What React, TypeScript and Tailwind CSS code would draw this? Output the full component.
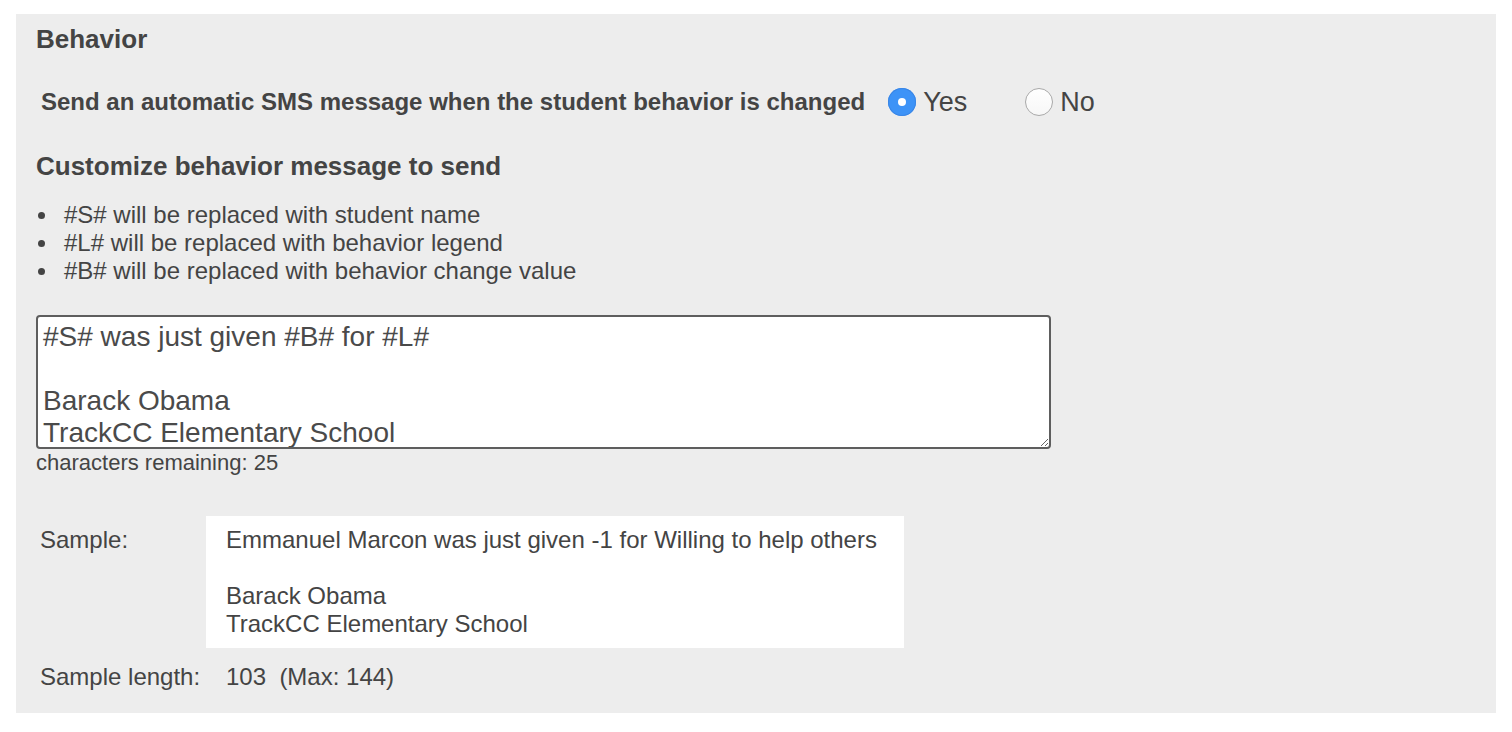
import React from "react";

const font = { fontFamily: '"Liberation Sans", Arial, Helvetica, sans-serif' };

const Radio: React.FC<{ checked?: boolean; label: string }> = ({ checked, label }) => (
  <label className="flex items-center">
    {checked ? (
      <span className="w-[28px] h-[28px] rounded-full bg-[#3d93f7] flex items-center justify-center shadow-[inset_0_0_0_1px_#3a86e6]">
        <span className="w-[8px] h-[8px] rounded-full bg-white" />
      </span>
    ) : (
      <span className="w-[28px] h-[28px] rounded-full bg-gradient-to-b from-white to-[#f7f7f7] border border-[#a9a9a9]" />
    )}
    <span className="ml-[7px] text-[27px] leading-[30px] text-[#444]">{label}</span>
  </label>
);

const bullets = [
  "#S# will be replaced with student name",
  "#L# will be replaced with behavior legend",
  "#B# will be replaced with behavior change value",
];

export default function App() {
  return (
    <div className="min-h-screen bg-white pt-[14px] pl-[16px]" style={font}>
      <div className="w-[1480px] h-[699px] bg-[#ededed] pl-[20px] pt-[10px] text-[#444]">
        <h2 className="text-[26px] leading-[30px] font-bold">Behavior</h2>

        <div className="flex items-center h-[36px] mt-[30px] pl-[5px]">
          <span className="text-[24px] leading-[28px] font-bold">
            Send an automatic SMS message when the student behavior is changed
          </span>
          <div className="ml-[23px] flex items-center gap-[58px]">
            <Radio checked label="Yes" />
            <Radio label="No" />
          </div>
        </div>

        <h3 className="mt-[31px] text-[26px] leading-[30px] font-bold">
          Customize behavior message to send
        </h3>

        <ul className="mt-[20px]">
          {bullets.map((b) => (
            <li key={b} className="flex items-center text-[24px] leading-[28px]">
              <span className="ml-[2px] w-[7px] h-[7px] rounded-full bg-[#444]" />
              <span className="ml-[19px]">{b}</span>
            </li>
          ))}
        </ul>

        <textarea
          className="block mt-[30px] w-[1015px] h-[134px] border-2 border-[#5e5e5e] rounded-[4px] bg-white pl-[5px] pt-[4px] text-[28px] leading-[32px] text-[#4a4a4a] overflow-hidden resize"
          defaultValue={"#S# was just given #B# for #L#\n\nBarack Obama\nTrackCC Elementary School"}
          style={font}
        />
        <p className="mt-[2px] text-[22px] leading-[24px]">characters remaining: 25</p>

        <div className="mt-[41px] grid grid-cols-[170px_698px] text-[24px] leading-[28px]">
          <div className="pl-[4px] pt-[10px]">Sample:</div>
          <div className="bg-white pl-[20px] py-[10px]">
            <div>Emmanuel Marcon was just given -1 for Willing to help others</div>
            <div>&nbsp;</div>
            <div>Barack Obama</div>
            <div>TrackCC Elementary School</div>
          </div>
          <div className="pl-[4px] mt-[15px]">Sample length:</div>
          <div className="pl-[20px] mt-[15px] whitespace-pre">103  (Max: 144)</div>
        </div>
      </div>
    </div>
  );
}
